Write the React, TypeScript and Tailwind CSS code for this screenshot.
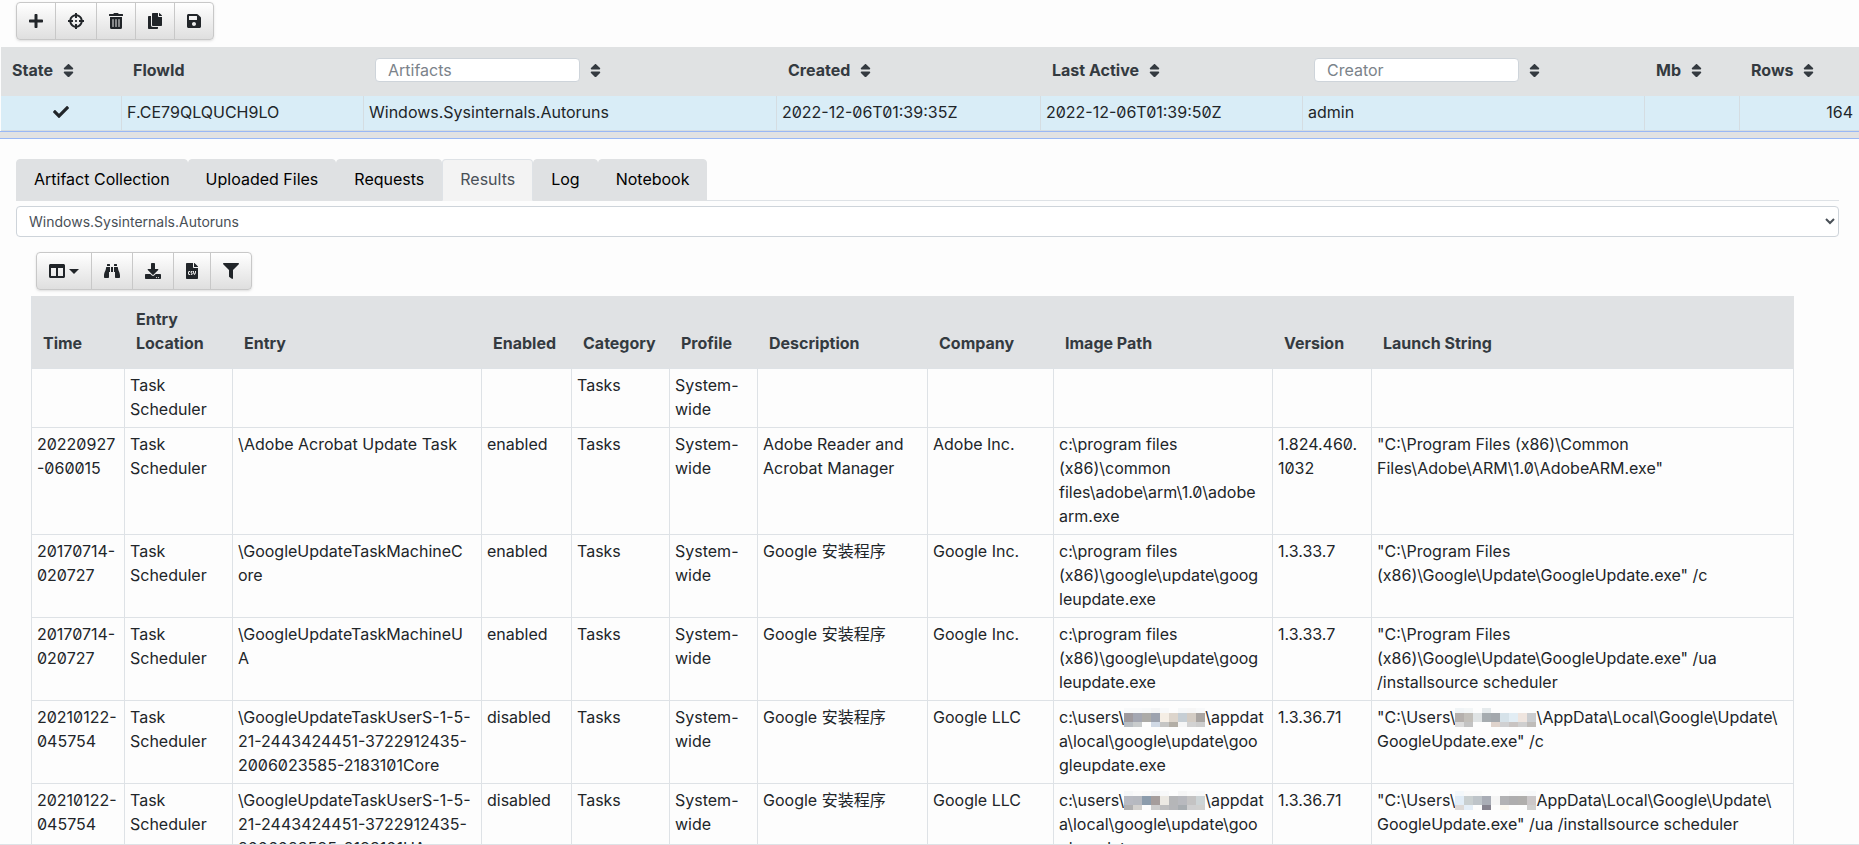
import React from "react";
import type { IconType } from "react-icons";
import {
  FaBinoculars,
  FaCheck,
  FaColumns,
  FaCopy,
  FaCrosshairs,
  FaDownload,
  FaFileCsv,
  FaFilter,
  FaPlus,
  FaSave,
  FaSort,
  FaTrashAlt,
} from "react-icons/fa";

const BUTTON =
  "-ml-px flex h-[38px] items-center border border-[#c8c8c8] bg-linear-to-b from-white to-[#dfdfdf] px-3 text-[#212529] first:ml-0 first:rounded-l last:rounded-r";

type ToolButtonProps = { label: string; icon: IconType; width?: string; caret?: boolean };

function ToolButton({ label, icon: Icon, width = "w-4", caret }: ToolButtonProps) {
  return (
    <button type="button" aria-label={label} title={label} className={BUTTON}>
      <Icon className={`h-4 ${width}`} />
      {caret && (
        <svg viewBox="0 0 10 5" className="ml-1 h-[5px] w-[10px]" fill="currentColor">
          <path d="M0 0h10L5 5z" />
        </svg>
      )}
    </button>
  );
}

function SortIcon() {
  return <FaSort className="ml-[10px] h-[17px] w-[11px] shrink-0" />;
}

type FlowColumn = { name: string; width: string; sort?: boolean; filter?: boolean };

const flowColumns: FlowColumn[] = [
  { name: "State", width: "w-[121px]", sort: true },
  { name: "FlowId", width: "w-[242px]" },
  { name: "Artifacts", width: "w-[413px]", sort: true, filter: true },
  { name: "Created", width: "w-[264px]", sort: true },
  { name: "Last Active", width: "w-[262px]", sort: true },
  { name: "Creator", width: "w-[342px]", sort: true, filter: true },
  { name: "Mb", width: "w-[95px]", sort: true },
  { name: "Rows", width: "w-[119px]", sort: true },
];

function FlowTable() {
  const cell = "border-r border-b border-[#d5dde2] px-[5px] pt-1 pb-1.5 text-left font-normal";
  return (
    <div className="pl-px">
      <table className="w-full table-fixed border-separate border-spacing-0">
        <thead className="bg-[#e0e2e3] text-[#343a40]">
          <tr>
            {flowColumns.map((c) => (
              <th key={c.name} scope="col" className={`${c.width} h-[49px] pb-[3px] pl-[11px] text-left font-bold`}>
                <div className="flex items-center whitespace-nowrap">
                  {c.filter ? (
                    <input
                      aria-label={c.name}
                      placeholder={c.name}
                      className="h-6 w-[205px] rounded border border-[#ced4da] bg-white px-3 font-normal outline-none placeholder:text-[#7b838a]"
                    />
                  ) : (
                    c.name
                  )}
                  {c.sort && <SortIcon />}
                </div>
              </th>
            ))}
          </tr>
        </thead>
        <tbody className="bg-[#d9edf7]">
          <tr>
            <td className={cell}>
              <FaCheck className="mx-auto h-4 w-4" aria-label="Finished" />
            </td>
            <td className={cell}>F.CE79QLQUCH9LO</td>
            <td className={cell}>Windows.Sysinternals.Autoruns</td>
            <td className={cell}>2022-12-06T01:39:35Z</td>
            <td className={cell}>2022-12-06T01:39:50Z</td>
            <td className={cell}>admin</td>
            <td className={cell}></td>
            <td className="border-b border-[#d5dde2] px-1.5 pt-1 pb-1.5 text-right">164</td>
          </tr>
        </tbody>
      </table>
    </div>
  );
}

const tabs = ["Artifact Collection", "Uploaded Files", "Requests", "Results", "Log", "Notebook"];

function Tabs() {
  return (
    <div role="tablist" className="flex border-b border-[#dee2e6]">
      {tabs.map((t) => (
        <button
          key={t}
          role="tab"
          type="button"
          aria-selected={t === "Results"}
          className={
            t === "Results"
              ? "-mb-px rounded-t border border-[#dee2e6] border-b-[#f3f3f3] bg-[#f3f3f3] px-[17px] pt-[7px] pb-[9px] text-[#495057]"
              : "-mb-px rounded-t border border-[#dfe1e3] bg-[#dfe1e3] px-[17px] pt-[7px] pb-[9px] text-black"
          }
        >
          {t}
        </button>
      ))}
    </div>
  );
}

/* Pixelated block that hides a user name; each array is one row of 9px tiles. */
function Redacted({ rows }: { rows: string[][] }) {
  const tops = [0, 5, 14];
  const heights = [5, 9, 5];
  return (
    <svg
      role="img"
      aria-label="redacted"
      viewBox="0 0 81 19"
      className="inline-block h-[19px] w-[81px] align-[-4px]"
      shapeRendering="crispEdges"
    >
      {rows.map((r, y) =>
        r.map((c, x) => <rect key={`${x}-${y}`} x={x * 9} y={tops[y]} width="9" height={heights[y]} fill={c} />),
      )}
    </svg>
  );
}

const maskA = [
  ["#f8f9fa", "#f8f9fa", "#f6f8f9", "#f3f4f5", "#f8f9fa", "#fdfdfd", "#f5f7f8", "#f6f6f6", "#f8f9fa"],
  ["#9f9a9e", "#a4a7b2", "#acaba8", "#9ca2ae", "#f5eee5", "#ddd5cc", "#c6ced4", "#d3ccc4", "#a9a5a2"],
  ["#b9bec3", "#c9cccd", "#fdfdfd", "#d0d9e5", "#c5c5c4", "#b3aea6", "#f6f6f6", "#d2d2d2", "#cdcdcd"],
];
const maskB = [
  ["#f0f4f6", "#f3f6f7", "#fdfdfd", "#e5eaec", "#fdfdfd", "#fdfdfd", "#fdfdfd", "#fdfdfd", "#fdfdfd"],
  ["#b5b0ad", "#c2bfba", "#dfe3e4", "#a6acb0", "#a4a8ad", "#d6e2e9", "#e2edf4", "#efe5df", "#cacdd0"],
  ["#dcdcdc", "#c3c3c3", "#fdfdfd", "#fdfdfd", "#dfd3cc", "#d0d0d1", "#c9c4c2", "#cfcfcf", "#bfbcb9"],
];
const maskC = [
  ["#f6f7f8", "#fafafa", "#f8f8f8", "#f3f4f5", "#f8f9fa", "#fdfdfd", "#f6f6f6", "#fafafa", "#f8f9fa"],
  ["#b8bac2", "#b6b9c0", "#8c9cac", "#a59d9c", "#ece9e3", "#b5b6b8", "#b8b9be", "#c4c3c3", "#cdd4d6"],
  ["#b0b0b1", "#d3d1ce", "#fdfdfd", "#cdcdcd", "#bebebf", "#b5b6b9", "#a8adb1", "#cfcfd0", "#d0d0cf"],
];
const maskD = [
  ["#f4f8fb", "#fafafa", "#fafafa", "#fdfdfd", "#fdfdfd", "#fdfdfd", "#fafafa", "#fafafa", "#f8f9fa"],
  ["#e2edf7", "#c9cfd0", "#bec4c9", "#a9adb6", "#f5f5f5", "#b2b2b4", "#aeadae", "#b0aeac", "#cbc7c8"],
  ["#ddd9d7", "#e5eef7", "#fdfdfd", "#86838f", "#fdfdfd", "#fbf8f0", "#fdfdfd", "#fdfdfd", "#cfcfce"],
];

const resultColumns = [
  { name: "Time", width: "w-[93px]" },
  { name: "Entry Location", width: "w-[108px]" },
  { name: "Entry", width: "w-[249px]" },
  { name: "Enabled", width: "w-[90px]" },
  { name: "Category", width: "w-[98px]" },
  { name: "Profile", width: "w-[88px]" },
  { name: "Description", width: "w-[170px]" },
  { name: "Company", width: "w-[126px]" },
  { name: "Image Path", width: "w-[219px]" },
  { name: "Version", width: "w-[99px]" },
  { name: "Launch String", width: "w-[422px]" },
];

const google = "Google 安装程序";

const results: React.ReactNode[][] = [
  ["", "Task Scheduler", "", "", "Tasks", "System-wide", "", "", "", "", ""],
  [
    "20220927\n-060015",
    "Task Scheduler",
    "\\Adobe Acrobat Update Task",
    "enabled",
    "Tasks",
    "System-wide",
    "Adobe Reader and Acrobat Manager",
    "Adobe Inc.",
    "c:\\program files (x86)\\common files\\adobe\\arm\\1.0\\adobe\narm.exe",
    "1.824.460.\n1032",
    '"C:\\Program Files (x86)\\Common Files\\Adobe\\ARM\\1.0\\AdobeARM.exe"',
  ],
  [
    "20170714-020727",
    "Task Scheduler",
    "\\GoogleUpdateTaskMachineC\nore",
    "enabled",
    "Tasks",
    "System-wide",
    google,
    "Google Inc.",
    "c:\\program files (x86)\\google\\update\\goog\nleupdate.exe",
    "1.3.33.7",
    '"C:\\Program Files\n(x86)\\Google\\Update\\GoogleUpdate.exe" /c',
  ],
  [
    "20170714-020727",
    "Task Scheduler",
    "\\GoogleUpdateTaskMachineU\nA",
    "enabled",
    "Tasks",
    "System-wide",
    google,
    "Google Inc.",
    "c:\\program files (x86)\\google\\update\\goog\nleupdate.exe",
    "1.3.33.7",
    '"C:\\Program Files\n(x86)\\Google\\Update\\GoogleUpdate.exe" /ua\n/installsource scheduler',
  ],
  [
    "20210122-045754",
    "Task Scheduler",
    "\\GoogleUpdateTaskUserS-1-5-21-2443424451-3722912435-2006023585-2183101Core",
    "disabled",
    "Tasks",
    "System-wide",
    google,
    "Google LLC",
    <>
      {"c:\\users\\"}
      <Redacted rows={maskA} />
      {"\\appdat\na\\local\\google\\update\\goo\ngleupdate.exe"}
    </>,
    "1.3.36.71",
    <>
      {'"C:\\Users\\'}
      <Redacted rows={maskB} />
      {'\\AppData\\Local\\Google\\Update\\\nGoogleUpdate.exe" /c'}
    </>,
  ],
  [
    "20210122-045754",
    "Task Scheduler",
    "\\GoogleUpdateTaskUserS-1-5-21-2443424451-3722912435-2006023585-2183101UA",
    "disabled",
    "Tasks",
    "System-wide",
    google,
    "Google LLC",
    <>
      {"c:\\users\\"}
      <Redacted rows={maskC} />
      {"\\appdat\na\\local\\google\\update\\goo\ngleupdate.exe"}
    </>,
    "1.3.36.71",
    <>
      {'"C:\\Users\\'}
      <Redacted rows={maskD} />
      {'AppData\\Local\\Google\\Update\\\nGoogleUpdate.exe" /ua /installsource scheduler'}
    </>,
  ],
];

function ResultTable() {
  return (
    <table className="w-full table-fixed border-separate border-spacing-0 border-l border-[#dee2e6]">
      <thead className="bg-[#e0e2e4] text-[#343a40]">
        <tr>
          {resultColumns.map((c) => (
            <th
              key={c.name}
              scope="col"
              className={`${c.width} border-b border-[#dee2e6] pt-[11px] pb-[13px] pl-[11px] text-left align-bottom font-bold`}
            >
              {c.name}
            </th>
          ))}
        </tr>
      </thead>
      <tbody>
        {results.map((row, i) => (
          <tr key={i}>
            {row.map((v, j) => (
              <td
                key={j}
                className="border-r border-b border-[#dee2e6] px-[5px] pt-1 pb-1.5 align-top wrap-anywhere whitespace-pre-line"
              >
                {v}
              </td>
            ))}
          </tr>
        ))}
      </tbody>
    </table>
  );
}

export default function App() {
  return (
    <main className="flex h-screen flex-col overflow-hidden border-b border-[#dee2e6] bg-[#fdfdfd] font-['Inter','Noto_Sans_CJK_SC',sans-serif] text-base text-[#212529] slashed-zero">
      <div className="flex px-4 pt-[2px] pb-[7px]">
        <div role="toolbar" aria-label="Flow actions" className="flex rounded shadow-sm">
          <ToolButton label="New collection" icon={FaPlus} width="w-3.5" />
          <ToolButton label="Add to hunt" icon={FaCrosshairs} />
          <ToolButton label="Delete" icon={FaTrashAlt} width="w-3.5" />
          <ToolButton label="Copy collection" icon={FaCopy} width="w-3.5" />
          <ToolButton label="Save collection" icon={FaSave} width="w-3.5" />
        </div>
      </div>
      <FlowTable />
      <div className="h-2 shrink-0 border-y border-[#9ab8f5] bg-[#e2e2e2]" />
      <div className="min-h-0 flex-1 overflow-hidden pt-5 pr-5 pl-4">
        <Tabs />
        <select
          aria-label="Artifact"
          className="mt-[5px] block h-[31px] w-full rounded border border-[#ced4da] bg-white px-2 text-sm text-[#495057]"
        >
          <option>Windows.Sysinternals.Autoruns</option>
        </select>
        <div className="pt-[15px] pr-[45px] pl-[15px]">
          <div className="flex pb-[6px] pl-[5px]">
            <div role="toolbar" aria-label="Table actions" className="flex rounded shadow-sm">
              <ToolButton label="Columns" icon={FaColumns} caret />
              <ToolButton label="Inspect raw JSON" icon={FaBinoculars} />
              <ToolButton label="Download JSON" icon={FaDownload} />
              <ToolButton label="Download CSV" icon={FaFileCsv} width="w-3" />
              <ToolButton label="Filter" icon={FaFilter} />
            </div>
          </div>
          <ResultTable />
        </div>
      </div>
    </main>
  );
}
